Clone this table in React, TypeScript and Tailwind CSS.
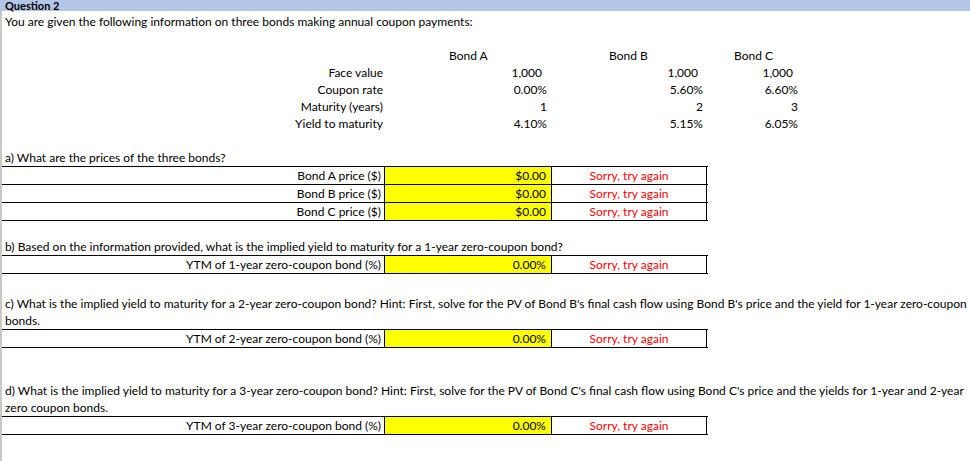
import React from "react";

const FONT = { fontFamily: "Lato, 'Open Sans', sans-serif" };

function AnswerBox({
  rows,
}: {
  rows: { label: string; value: string }[];
}) {
  return (
    <div className="w-[706px] border-b border-black">
      {rows.map((r) => (
        <div
          key={r.label}
          className="grid grid-cols-[383px_167px_155px] h-[18px] border-t border-black leading-[17px]"
        >
          <div className="text-right pr-[3px] border-r border-black whitespace-nowrap">
            {r.label}
          </div>
          <div className="bg-[#ffff00] text-right pr-[5px] border-r border-black">
            {r.value}
          </div>
          <div className="text-center text-[#ff0000] border-r border-black">
            Sorry, try again
          </div>
        </div>
      ))}
    </div>
  );
}

const BONDS = [
  { face: "1,000", coupon: "0.00%", maturity: "1", ytm: "4.10%" },
  { face: "1,000", coupon: "5.60%", maturity: "2", ytm: "5.15%" },
  { face: "1,000", coupon: "6.60%", maturity: "3", ytm: "6.05%" },
];

export default function App() {
  const grid = "grid grid-cols-[381px_63px_104px_56px_100px_25px_70px] h-[17px] leading-[17px]";
  return (
    <div
      className="w-[970px] h-[461px] bg-white text-black text-[12px] overflow-hidden"
      style={FONT}
    >
      {/* Title band */}
      <div className="h-[11px] bg-[#b4c6e7] pl-[5px]">
        <div className="font-bold text-[11px] leading-[11px]">Question 2</div>
      </div>

      <div className="h-[450px] border-l-2 border-[#c8c8c8] flex flex-col">
        <div className="mt-[2px] h-[17px] leading-[17px] pl-[3px] whitespace-nowrap">
          You are given the following information on three bonds making annual coupon payments:
        </div>
        <div className="h-[17px]" />

        {/* Bond data */}
        <div className={grid}>
          <div />
          <div />
          <div className="pl-[3px]">Bond A</div>
          <div />
          <div className="pl-[3px]">Bond B</div>
          <div />
          <div className="pl-[3px]">Bond C</div>
        </div>
        {[
          { label: "Face value", key: "face" as const, pad: "pr-[8px]" },
          { label: "Coupon rate", key: "coupon" as const, pad: "pr-[3px]" },
          { label: "Maturity (years)", key: "maturity" as const, pad: "pr-[3px]" },
          { label: "Yield to maturity", key: "ytm" as const, pad: "pr-[3px]" },
        ].map((row) => (
          <div key={row.label} className={grid}>
            <div className="text-right whitespace-nowrap">{row.label}</div>
            <div />
            <div className={`text-right ${row.pad}`}>{BONDS[0][row.key]}</div>
            <div />
            <div className={`text-right ${row.pad}`}>{BONDS[1][row.key]}</div>
            <div />
            <div className={`text-right ${row.pad}`}>{BONDS[2][row.key]}</div>
          </div>
        ))}

        {/* a) */}
        <div className="mt-[17px] h-[17px] leading-[17px] pl-[3px]">
          a) What are the prices of the three bonds?
        </div>
        <AnswerBox
          rows={[
            { label: "Bond A price ($)", value: "$0.00" },
            { label: "Bond B price ($)", value: "$0.00" },
            { label: "Bond C price ($)", value: "$0.00" },
          ]}
        />

        {/* b) */}
        <div className="mt-[17px] h-[17px] leading-[17px] pl-[3px] whitespace-nowrap">
          b) Based on the information provided, what is the implied yield to maturity for a 1-year zero-coupon bond?
        </div>
        <AnswerBox rows={[{ label: "YTM of 1-year zero-coupon bond (%)", value: "0.00%" }]} />

        {/* c) */}
        <div className="mt-[21px] h-[34px] leading-[17px] pl-[3px] whitespace-nowrap">
          c) What is the implied yield to maturity for a 2-year zero-coupon bond? Hint: First, solve for the PV of Bond B's final cash flow using Bond B's price and the yield for 1-year zero-coupon
          <br />
          bonds.
        </div>
        <AnswerBox rows={[{ label: "YTM of 2-year zero-coupon bond (%)", value: "0.00%" }]} />

        {/* d) */}
        <div className="mt-[34px] h-[34px] leading-[17px] pl-[3px] whitespace-nowrap">
          d) What is the implied yield to maturity for a 3-year zero-coupon bond? Hint: First, solve for the PV of Bond C's final cash flow using Bond C's price and the yields for 1-year and 2-year
          <br />
          zero coupon bonds.
        </div>
        <AnswerBox rows={[{ label: "YTM of 3-year zero-coupon bond (%)", value: "0.00%" }]} />
      </div>
    </div>
  );
}
